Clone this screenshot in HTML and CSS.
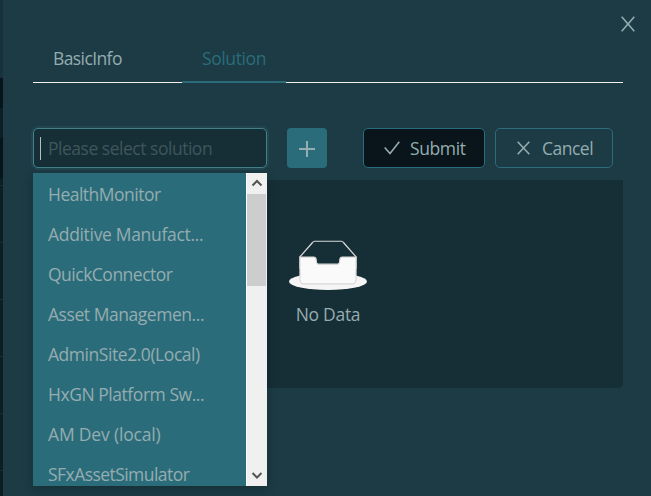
FILE: index.html
```html
<!DOCTYPE html>
<html lang="en">
<head>
<meta charset="utf-8">
<title>Solution</title>
<link rel="stylesheet" href="styles.css">
</head>
<body>
<div class="backdrop"></div>
<main class="drawer">
  <header class="close-row">
    <button class="close" aria-label="Close"><svg width="14" height="16" viewBox="0 0 14 16"><path d="M.7.7l12.6 14.6M13.3.7L.7 15.3"/></svg></button>
  </header>
  <nav class="tabs">
    <a class="tab basic"><span>BasicInfo</span></a>
    <a class="tab active"><span>Solution</span></a>
  </nav>
  <section class="toolbar">
    <div class="select">
      <i class="caret"></i><span class="placeholder">Please select solution</span>
      <div class="dropdown">
        <ul class="options">
          <li class="o1"><span>HealthMonitor</span></li>
          <li class="o2"><span>Additive Manufact...</span></li>
          <li class="o3"><span>QuickConnector</span></li>
          <li class="o4"><span>Asset Managemen...</span></li>
          <li class="o5"><span>AdminSite2.0(Local)</span></li>
          <li class="o6"><span>HxGN Platform Sw...</span></li>
          <li class="o7"><span>AM Dev (local)</span></li>
          <li class="o8"><span>SFxAssetSimulator</span></li>
        </ul>
        <div class="scrollbar">
          <svg width="20" height="20" viewBox="0 0 20 20"><path d="M5.5 12.5L10 8l4.5 4.5"/></svg>
          <div class="track"><div class="thumb"></div></div>
          <svg width="20" height="20" viewBox="0 0 20 20"><path d="M5.5 7L10 11.5 14.5 7"/></svg>
        </div>
      </div>
    </div>
    <button class="add" aria-label="Add"><svg width="16" height="16" viewBox="0 0 16 16"><path d="M8 0v16M0 8h16"/></svg></button>
    <button class="btn submit"><svg width="16" height="14" viewBox="0 0 16 14"><path d="M.7 6.5L6 12.6 15.3.8"/></svg><span>Submit</span></button>
    <button class="btn cancel"><svg width="13" height="14" viewBox="0 0 13 14"><path d="M.7.7l11.6 12.6M12.3.7L.7 13.3"/></svg><span>Cancel</span></button>
  </section>
  <section class="empty">
    <svg width="78" height="50" viewBox="0 0 64 41"><g transform="translate(0 1)" fill="none">
      <ellipse cx="32" cy="33" rx="32" ry="7" fill="#f5f5f5"/>
      <g stroke="#d9d9d9"><path d="M55 12.76L44.854 1.258C44.367.474 43.656 0 42.907 0H21.093c-.749 0-1.46.474-1.947 1.257L9 12.761V22h46v-9.24z"/>
      <path fill="#fafafa" d="M41.613 15.931c0-1.605.994-2.93 2.227-2.931H55v18.137C55 33.26 53.68 35 52.05 35h-40.1C10.32 35 9 33.259 9 31.137V13h11.16c1.233 0 2.227 1.323 2.227 2.928v.022c0 1.605 1.005 2.901 2.237 2.901h14.752c1.232 0 2.237-1.308 2.237-2.913v-.007z"/></g>
    </g></svg>
    <p>No Data</p>
  </section>
</main>
</body>
</html>
```
FILE: styles.css
```css
* { box-sizing: border-box; }
body {
  margin: 0;
  display: flex;
  height: 496px;
  overflow: hidden;
  background: #1c3b44;
  color: #95acb0;
  font: 17.5px/24px "Open Sans", "Noto Sans", sans-serif;
}
button { font: inherit; color: inherit; padding: 0; margin: 0; }
svg { display: block; flex: none; }
path { stroke-linecap: butt; }
.backdrop {
  width: 3px;
  flex: none;
  background:
    linear-gradient(#17323a 78px, #07151a 78px 108px, #0d1f24 108px 138px, #07151a 138px 178px, transparent 178px),
    repeating-linear-gradient(#0d1d21 0 14px, #1a2c31 14px 15px, #0d1d21 15px 57px);
}
.drawer { flex: 1; padding: 0 28px 0 30px; }
.close-row { height: 34px; display: flex; justify-content: flex-end; align-items: flex-start; padding-top: 16px; margin-right: -12px; }
.close { border: 0; background: none; }
.close path, .btn path { fill: none; stroke: #95acb0; stroke-width: 1.6; }
.tabs { display: flex; height: 49px; border-bottom: 1px solid #f5f0ea; }
.tab { height: 49px; padding: 12px 20px 0; white-space: nowrap; }
.basic { width: 109px; margin-right: 40px; letter-spacing: -.6px; }
.active { width: 104px; color: #2b6c7a; border-bottom: 2px solid #2b6c7a; letter-spacing: -.4px; }
.toolbar { display: flex; height: 40px; margin-top: 45px; }
.select {
  position: relative;
  display: flex;
  align-items: center;
  width: 234px;
  margin-right: 20px;
  padding-left: 6px;
  border: 1px solid #438089;
  border-radius: 5px;
  background: #162e35;
  box-shadow: 0 0 0 2px #21464f;
}
.caret { width: 1px; height: 23px; background: #b0c0c3; margin-right: 7px; }
.placeholder { color: #3e565c; white-space: nowrap; letter-spacing: -.48px; padding-bottom: 1px; }
.dropdown {
  position: absolute;
  top: 44px;
  left: -1px;
  z-index: 2;
  display: flex;
  width: 234px;
  height: 313px;
  background: #2b6c7a;
  box-shadow: 0 3px 10px rgba(0, 0, 0, .22);
}
.options { flex: 1; height: 313px; margin: 0; padding: 1px 0 0; list-style: none; overflow: hidden; }
.options li { height: 40px; padding: 8px 0 0 15px; white-space: nowrap; letter-spacing: -.5px; }
.options .o2 { letter-spacing: -.32px; }
.options .o4, .options .o5, .options .o6 { letter-spacing: -.45px; }
.options .o7 { letter-spacing: -.17px; }
.options .o8 { letter-spacing: -.55px; }
.scrollbar { width: 21px; display: flex; flex-direction: column; background: #f0f0f0; border-left: 1px solid #fff; }
.scrollbar path { fill: none; stroke: #555; stroke-width: 2; }
.track { flex: 1; padding: 1px 1px 0 0; }
.thumb { height: 92px; background: #cdcdcd; }
.add { display: flex; align-items: center; justify-content: center; width: 40px; margin-right: 36px; border: 0; border-radius: 4px; background: #2b6c7a; }
.add svg { margin-top: 2px; }
.add path { stroke: #95acb0; stroke-width: 2; }
.btn { display: flex; align-items: center; border: 1px solid #2b6c7a; border-radius: 5px; white-space: nowrap; }
.submit { width: 122px; padding-left: 20px; gap: 10px; background: #09151a; letter-spacing: -.4px; }
.cancel { width: 118px; margin-left: 10px; padding-left: 21px; gap: 12px; background: none; letter-spacing: -.5px; }
.empty { height: 208px; margin-top: 12px; padding-top: 60px; display: flex; flex-direction: column; align-items: center; background: #162e35; border-radius: 0 0 5px 5px; }
.empty p { margin: 12px 0 0; letter-spacing: -.3px; }
```
